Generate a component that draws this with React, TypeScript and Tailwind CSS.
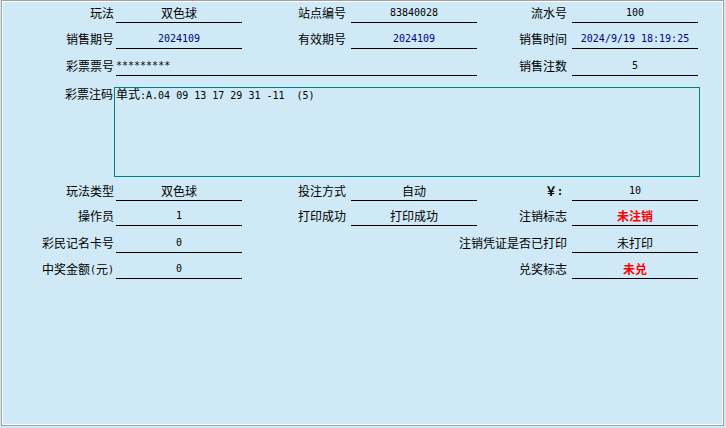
import type { ReactNode } from 'react';

const mono = "font-['DejaVu_Sans_Mono',monospace] text-[10px]";

function Label({ children, pr = 'pr-[5px]', className = '' }: { children?: ReactNode; pr?: string; className?: string }) {
  return (
    <div className={`h-[21px] flex items-center justify-end whitespace-nowrap pt-[1px] ${pr} ${className}`}>
      {children}
    </div>
  );
}

function Field({ children, left, className = '' }: { children?: ReactNode; left?: boolean; className?: string }) {
  return (
    <div
      className={`h-[21px] border-b border-black flex items-center whitespace-nowrap pt-[1px] ${
        left ? 'justify-start' : 'justify-center'
      } ${className}`}
    >
      {children}
    </div>
  );
}

function Row({ children, className = '' }: { children: ReactNode; className?: string }) {
  return (
    <div className={`grid grid-cols-[113px_126px_109px_126px_95px_126px] ${className}`}>{children}</div>
  );
}

const Num = ({ children, className = '' }: { children: ReactNode; className?: string }) => (
  <span className={`${mono} ${className}`}>{children}</span>
);

export default function App() {
  return (
    <div className="w-[726px] h-[428px] bg-[#cfeaf6] text-[12px] text-black font-['Noto_Sans_CJK_SC',sans-serif]">
      <div className="ml-[1px] w-[723px] h-[426px] border border-[#a0a0a0]">
        <div className="h-full border border-white">
          {/* row 1 */}
          <Row>
            <Label pr="pr-[2px]">玩法</Label>
            <Field>双色球</Field>
            <Label>站点编号</Label>
            <Field>
              <Num>83840028</Num>
            </Field>
            <Label>流水号</Label>
            <Field>
              <Num>100</Num>
            </Field>
          </Row>

          {/* row 2 */}
          <Row className="mt-[5px]">
            <Label pr="pr-[2px]">销售期号</Label>
            <Field>
              <Num className="text-[#000080]">2024109</Num>
            </Field>
            <Label>有效期号</Label>
            <Field>
              <Num className="text-[#000080]">2024109</Num>
            </Field>
            <Label>销售时间</Label>
            <Field>
              <Num className="text-[#000080]">2024/9/19 18:19:25</Num>
            </Field>
          </Row>

          {/* row 3 */}
          <Row className="mt-[6px]">
            <Label pr="pr-[2px]">彩票票号</Label>
            <Field left className="col-span-3">
              <Num>*********</Num>
            </Field>
            <Label>销售注数</Label>
            <Field>
              <Num>5</Num>
            </Field>
          </Row>

          {/* 彩票注码 */}
          <div className="mt-[11px] flex">
            <div className="w-[111px] flex justify-end pr-[1px] leading-[12px] pt-[1px]">彩票注码</div>
            <div className="w-[586px] h-[90px] border border-[#008080] pl-[1px] leading-[12px] whitespace-pre">
              单式<Num>:A.04 09 13 17 29 31 -11  (5)</Num>
            </div>
          </div>

          {/* row 5 */}
          <Row className="mt-[3px]">
            <Label pr="pr-[2px]">玩法类型</Label>
            <Field>双色球</Field>
            <Label>投注方式</Label>
            <Field>自动</Field>
            <Label>
              <span className="font-bold">￥</span>
              <Num className="font-bold">:</Num>
              <span className="w-[4px]" />
            </Label>
            <Field>
              <Num>10</Num>
            </Field>
          </Row>

          {/* row 6 */}
          <Row className="mt-[4px]">
            <Label pr="pr-[2px]">操作员</Label>
            <Field>
              <Num>1</Num>
            </Field>
            <Label>打印成功</Label>
            <Field>打印成功</Field>
            <Label>注销标志</Label>
            <Field className="text-[#ff0000] font-bold">未注销</Field>
          </Row>

          {/* row 7 */}
          <Row className="mt-[6px]">
            <Label pr="pr-[2px]">彩民记名卡号</Label>
            <Field>
              <Num>0</Num>
            </Field>
            <div />
            <Label className="col-span-2">注销凭证是否已打印</Label>
            <Field>未打印</Field>
          </Row>

          {/* row 8 */}
          <Row className="mt-[5px]">
            <Label pr="pr-[2px]">
              中奖金额<Num>(</Num>元<Num>)</Num>
            </Label>
            <Field>
              <Num>0</Num>
            </Field>
            <div />
            <div />
            <Label>兑奖标志</Label>
            <Field className="text-[#ff0000] font-bold">未兑</Field>
          </Row>
        </div>
      </div>
    </div>
  );
}
